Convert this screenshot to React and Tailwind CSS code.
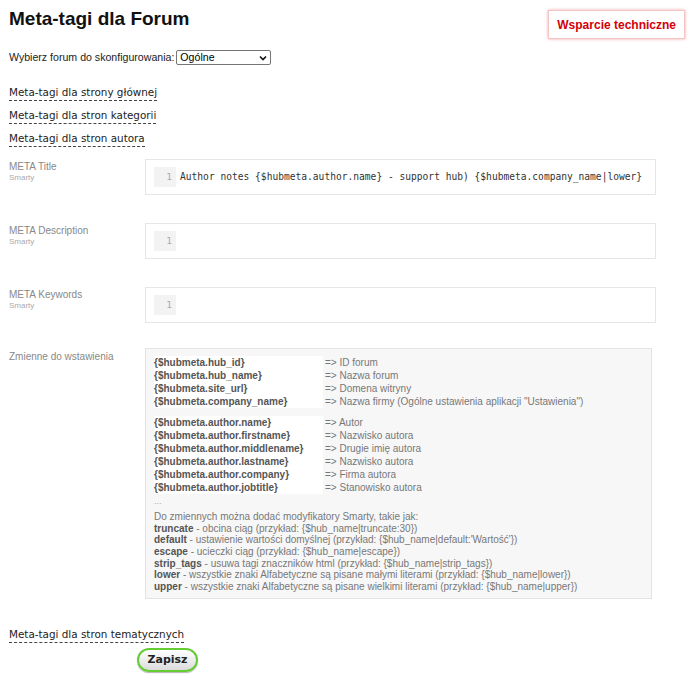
import React from "react";

// ================= DATA =================

const hubVars = [
  ["{$hubmeta.hub_id}", "=> ID forum"],
  ["{$hubmeta.hub_name}", "=> Nazwa forum"],
  ["{$hubmeta.site_url}", "=> Domena witryny"],
  ["{$hubmeta.company_name}", '=> Nazwa firmy (Ogólne ustawienia aplikacji "Ustawienia")'],
];

const authorVars = [
  ["{$hubmeta.author.name}", "=> Autor"],
  ["{$hubmeta.author.firstname}", "=> Nazwisko autora"],
  ["{$hubmeta.author.middlename}", "=> Drugie imię autora"],
  ["{$hubmeta.author.lastname}", "=> Nazwisko autora"],
  ["{$hubmeta.author.company}", "=> Firma autora"],
  ["{$hubmeta.author.jobtitle}", "=> Stanowisko autora"],
];

const modifiers = [
  ["truncate", " - obcina ciąg (przykład: {$hub_name|truncate:30})"],
  ["default", " - ustawienie wartości domyślnej (przykład: {$hub_name|default:'Wartość'})"],
  ["escape", " - ucieczki ciąg (przykład: {$hub_name|escape})"],
  ["strip_tags", " - usuwa tagi znaczników html (przykład: {$hub_name|strip_tags})"],
  ["lower", " - wszystkie znaki Alfabetyczne są pisane małymi literami (przykład: {$hub_name|lower})"],
  ["upper", " - wszystkie znaki Alfabetyczne są pisane wielkimi literami (przykład: {$hub_name|upper})"],
];

// ================= PIECES =================

const SectionLink = ({ children }) => (
  <div className="h-[23px]">
    <span className="inline-block border-b border-dashed border-[#444] pb-[1px] font-['DejaVu_Sans',sans-serif] text-[10.4px] leading-[14px] text-[#222]">
      {children}
    </span>
  </div>
);

const FieldLabel = ({ title }) => (
  <div className="w-[136px] shrink-0 pt-[2px] text-[#888]">
    <div className="text-[10px] leading-[12px]">{title}</div>
    <div className="text-[8px] leading-[10px] text-[#aaa]">Smarty</div>
  </div>
);

const Editor = ({ value }) => (
  <div className="flex h-[36px] w-[511px] items-start border border-[#e6e6e6] bg-white px-[8px] pt-[7px]">
    <div className="flex h-[20px] w-[22px] shrink-0 items-center justify-end bg-[#f3f3f3] pr-[4px] font-['DejaVu_Sans_Mono',monospace] text-[9.5px] text-[#aaa]">
      1
    </div>
    <div className="ml-[4px] flex h-[20px] items-center whitespace-nowrap font-['DejaVu_Sans_Mono',monospace] text-[9.6px] text-[#333]">
      {value}
    </div>
  </div>
);

const VarTable = ({ rows }) => (
  <div className="flex flex-col">
    {rows.map(([k, v]) => (
      <div key={k} className="flex h-[13px] items-center">
        <div className="w-[169px] shrink-0 bg-white font-bold text-[#555]">{k}</div>
        <div className="ml-[2px] whitespace-nowrap">{v}</div>
      </div>
    ))}
  </div>
);

// ================= PAGE =================

export default function App() {
  return (
    <div className="min-h-[700px] w-[700px] bg-white font-['Liberation_Sans',Arial,sans-serif] text-[#222]">
      <div className="px-[9px] pt-[8px]">
        {/* Header */}
        <div className="flex items-start justify-between">
          <h1 className="text-[19px] font-bold leading-[22px] text-[#111]">Meta-tagi dla Forum</h1>
          <div className="mr-[6px] mt-[2px] flex h-[29px] items-center border border-[#f4c4c4] bg-white px-[8px] text-[12px] font-bold text-[#d4000a] shadow-[0_0_3px_rgba(220,0,0,0.35)]">
            Wsparcie techniczne
          </div>
        </div>

        {/* Forum select */}
        <div className="mt-[11px] flex items-center text-[10.6px]">
          <span>Wybierz forum do skonfigurowania:</span>
          <div className="ml-[2px] flex h-[15px] w-[95px] items-center justify-between rounded-[2px] border border-[#767676] px-[3px] text-[10.6px] text-black">
            <span>Ogólne</span>
            <svg width="8" height="6" viewBox="0 0 8 6">
              <path d="M1 1.5 L4 4.5 L7 1.5" fill="none" stroke="#111" strokeWidth="1.6" />
            </svg>
          </div>
        </div>

        {/* Section links */}
        <div className="mt-[13px]">
          <SectionLink>Meta-tagi dla strony głównej</SectionLink>
          <SectionLink>Meta-tagi dla stron kategorii</SectionLink>
          <SectionLink>Meta-tagi dla stron autora</SectionLink>
        </div>

        {/* Fields */}
        <div className="mt-[11px] flex flex-col">
          <div className="flex">
            <FieldLabel title="META Title" />
            <Editor value="Author notes {$hubmeta.author.name} - support hub) {$hubmeta.company_name|lower}" />
          </div>
          <div className="mt-[28px] flex">
            <FieldLabel title="META Description" />
            <Editor value="" />
          </div>
          <div className="mt-[28px] flex">
            <FieldLabel title="META Keywords" />
            <Editor value="" />
          </div>

          {/* Variables */}
          <div className="mt-[25px] flex">
            <div className="w-[136px] shrink-0 pt-[3px] text-[10px] leading-[12px] text-[#888]">Zmienne do wstawienia</div>
            <div className="h-[251px] w-[507px] border border-[#e3e3e3] bg-[#f7f7f7] px-[8px] pt-[7px] text-[10px] leading-[13px] text-[#777]">
              <VarTable rows={hubVars} />
              <div className="mt-[8px]">
                <VarTable rows={authorVars} />
              </div>
              <div className="mt-[1px] text-[9px] leading-[12px] text-[#aaa]">...</div>
              <div className="mt-[4px] leading-[11.7px]">
                <div>Do zmiennych można dodać modyfikatory Smarty, takie jak:</div>
                {modifiers.map(([m, d]) => (
                  <div key={m} className="whitespace-nowrap">
                    <b className="text-[#555]">{m}</b>
                    {d}
                  </div>
                ))}
              </div>
            </div>
          </div>
        </div>

        {/* Bottom */}
        <div className="mt-[22px]">
          <SectionLink>Meta-tagi dla stron tematycznych</SectionLink>
        </div>
        <div className="ml-[128px] mt-[4px]">
          <button className="flex h-[24px] w-[61px] items-center justify-center rounded-full border-2 border-[#66cc33] bg-gradient-to-b from-white to-[#dcdcdc] font-['DejaVu_Sans',sans-serif] text-[11px] font-bold text-[#222] shadow-[0_1px_1px_rgba(0,0,0,0.3)]">
            Zapisz
          </button>
        </div>
      </div>
    </div>
  );
}
